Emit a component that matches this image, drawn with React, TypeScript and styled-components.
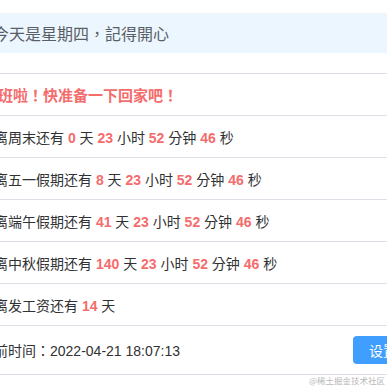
import React, {FC} from 'react';
import styled, {createGlobalStyle} from 'styled-components';

const GlobalStyle = createGlobalStyle`
  html, body {
    margin: 0;
    padding: 0;
    overflow: hidden;
    background: #fff;
  }
  body {
    font-family: 'Liberation Sans', 'Noto Sans CJK TC', 'Noto Sans CJK SC', sans-serif;
    color: #303133;
  }
`;

const Screen = styled.div`
  position: relative;
  width: 387px;
  height: 387px;
  overflow: hidden;
`;

const Panel = styled.div`
  width: 447px;
  margin-left: -20px;
  padding-top: 13px;
`;

const Notice = styled.div`
  display: flex;
  align-items: center;
  height: 40px;
  padding-left: 13px;
  background: #ecf6fe;
  color: #5a5e66;
  font-size: 16px;
  margin-bottom: 20px;
`;

const List = styled.ul`
  list-style: none;
  margin: 0;
  padding: 0;
  border-top: 1px solid #dcdfe6;
`;

const Row = styled.li<{$tall?: boolean}>`
  display: flex;
  align-items: center;
  justify-content: space-between;
  height: ${({$tall}) => ($tall ? 48 : 41)}px;
  padding-right: 14px;
  border-bottom: 1px solid #dcdfe6;
  font-size: 14px;
  color: #303133;
  white-space: nowrap;
`;

const Headline = styled.span`
  padding-left: 3px;
  color: #f56c6c;
  font-size: 15px;
  font-weight: bold;
`;

const Num = styled.b`
  color: #f56c6c;
  font-weight: bold;
`;

const Button = styled.button`
  height: 28px;
  padding: 0 16px;
  border: none;
  border-radius: 4px;
  background: #409eff;
  color: #fff;
  font-family: inherit;
  font-size: 14px;
  cursor: pointer;
`;

const Watermark = styled.span`
  position: absolute;
  right: 2px;
  bottom: 1px;
  font-size: 8.5px;
  color: #b8b8b8;
  font-family: 'Noto Sans CJK SC', sans-serif;
`;

interface Countdown {
  label: string;
  days: number;
  hours?: number;
  minutes?: number;
  seconds?: number;
}

const countdowns: Countdown[] = [
  {label: '距离周末还有', days: 0, hours: 23, minutes: 52, seconds: 46},
  {label: '距离五一假期还有', days: 8, hours: 23, minutes: 52, seconds: 46},
  {label: '距离端午假期还有', days: 41, hours: 23, minutes: 52, seconds: 46},
  {label: '距离中秋假期还有', days: 140, hours: 23, minutes: 52, seconds: 46},
  {label: '距离发工资还有', days: 14},
];

const CountdownText: FC<{item: Countdown}> = ({item}) => (
  <span>
    {item.label} <Num>{item.days}</Num> 天
    {item.hours !== undefined && (
      <>
        {' '}
        <Num>{item.hours}</Num> 小时 <Num>{item.minutes}</Num> 分钟{' '}
        <Num>{item.seconds}</Num> 秒
      </>
    )}
  </span>
);

const App: FC = () => {
  return (
    <Screen>
      <GlobalStyle />
      <Panel>
        <Notice>今天是星期四，記得開心</Notice>
        <List>
          <Row>
            <Headline>下班啦！快准备一下回家吧！</Headline>
          </Row>
          {countdowns.map((item) => (
            <Row key={item.label}>
              <CountdownText item={item} />
            </Row>
          ))}
          <Row $tall>
            <span>当前时间：2022-04-21 18:07:13</span>
            <Button>设置</Button>
          </Row>
        </List>
      </Panel>
      <Watermark>@稀土掘金技术社区</Watermark>
    </Screen>
  );
};

export default App;
